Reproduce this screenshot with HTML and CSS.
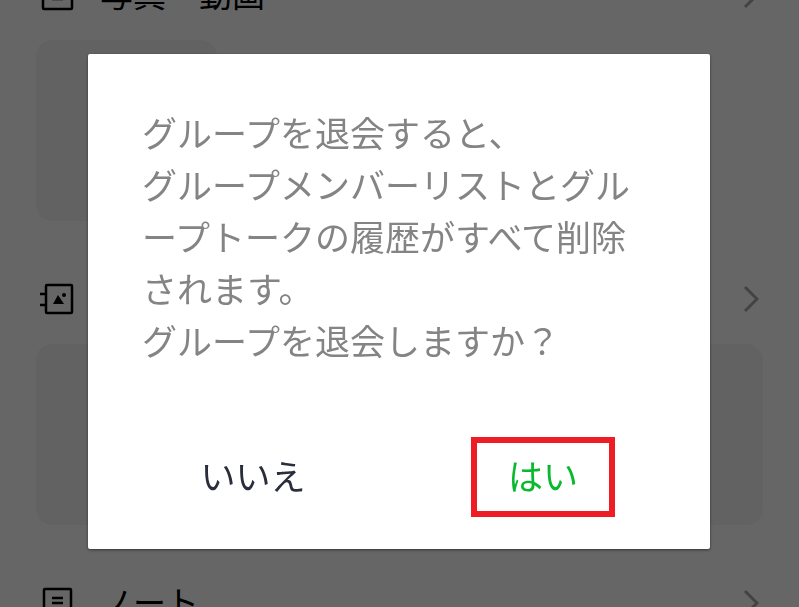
FILE: index.html
```
<!DOCTYPE html>
<html lang="ja">
<head>
<meta charset="utf-8">
<meta name="viewport" content="width=device-width, initial-scale=1">
<title>グループを退会</title>
<link rel="stylesheet" href="styles.css">
</head>
<body>
<main class="page">
  <section class="section">
    <h2 class="section-head">
      <svg class="icon" viewBox="0 0 36 36" aria-hidden="true"><rect x="5" y="3" width="29" height="29" rx="1"/><path d="M14 22h11"/></svg>
      <span class="section-title">写真・動画</span>
      <svg class="chevron" viewBox="0 0 16 28" aria-hidden="true"><path d="M2 2l12 12L2 26"/></svg>
    </h2>
    <div class="card card-small"></div>
  </section>
  <section class="section">
    <h2 class="section-head">
      <svg class="icon" viewBox="0 0 36 36" aria-hidden="true"><rect x="8" y="4" width="26" height="28" rx="1"/><path d="M2 13h6M2 24h6"/><path class="solid" d="M15 23l5-9 6 9z"/><circle class="solid" cx="26" cy="14" r="2"/></svg>
      <span class="section-title">アルバム</span>
      <svg class="chevron" viewBox="0 0 16 28" aria-hidden="true"><path d="M2 2l12 12L2 26"/></svg>
    </h2>
    <div class="card"></div>
  </section>
  <section class="section">
    <h2 class="section-head">
      <svg class="icon" viewBox="0 0 36 36" aria-hidden="true"><rect x="6" y="4" width="27" height="28" rx="1"/><path d="M14 13h11M14 18h11M14 24h11"/></svg>
      <span class="section-title">ノート</span>
      <svg class="chevron" viewBox="0 0 16 28" aria-hidden="true"><path d="M2 2l12 12L2 26"/></svg>
    </h2>
  </section>
</main>
<div class="overlay">
  <div class="dialog" role="alertdialog" aria-modal="true" aria-describedby="message">
    <p class="message" id="message">グループを退会すると、<br>グループメンバーリストとグループトークの履歴がすべて削除されます。<br>グループを退会しますか？</p>
    <div class="actions">
      <button class="button" type="button">いいえ</button>
      <button class="button button-confirm" type="button">はい</button>
    </div>
  </div>
</div>
</body>
</html>
```
FILE: styles.css
```
* {
  box-sizing: border-box;
}

body {
  margin: 0;
  height: 100vh;
  overflow: hidden;
  background: #fff;
  color: #000;
  font-family: "Noto Sans CJK JP", sans-serif;
}

/* The list is scrolled so that its first header is partly out of view. */
.page {
  height: calc(100vh + 45px);
  margin-top: -45px;
  padding: 0 36px;
  overflow: hidden;
}

.section {
  padding-bottom: 38px;
}

.section-head {
  display: flex;
  align-items: center;
  height: 80px;
  margin: 0 0 5px;
  padding-right: 4px;
  font-size: 33px;
  font-weight: 400;
}

.icon {
  width: 36px;
  height: 36px;
  margin: 0 26px 0 2px;
  fill: none;
  stroke: #000;
  stroke-width: 2.5;
}

.icon .solid {
  fill: #000;
  stroke: none;
}

.section-title {
  flex: 1;
  padding-bottom: 4px;
}

.chevron {
  width: 16px;
  height: 28px;
  fill: none;
  stroke: #a8a8a8;
  stroke-width: 3;
}

.card {
  height: 181px;
  border-radius: 16px;
  background: #f6f6f6;
}

.card-small {
  width: 181px;
}

.overlay {
  position: fixed;
  inset: 0;
  padding: 54px 89px 0 88px;
  background: rgba(0, 0, 0, 0.6);
}

.dialog {
  padding: 52px 0 32px;
  border-radius: 2px;
  background: #fff;
  box-shadow: 0 1px 3px rgba(0, 0, 0, 0.5);
}

.message {
  margin: 0;
  padding: 0 54px;
  color: #848484;
  font-size: 35px;
  line-height: 52px;
  line-break: anywhere;
}

.actions {
  display: grid;
  grid-template-columns: 1fr 1fr;
  justify-items: center;
  margin-top: 71px;
  padding: 0 22px 0 20px;
}

.button {
  width: 144px;
  height: 80px;
  padding: 0 0 4px;
  border: 6px solid transparent;
  background: none;
  color: #2b2d3d;
  font-family: inherit;
  font-size: 35px;
  line-height: 52px;
}

.button-confirm {
  border-color: #ee1c25;
  color: #08b92f;
}
```
